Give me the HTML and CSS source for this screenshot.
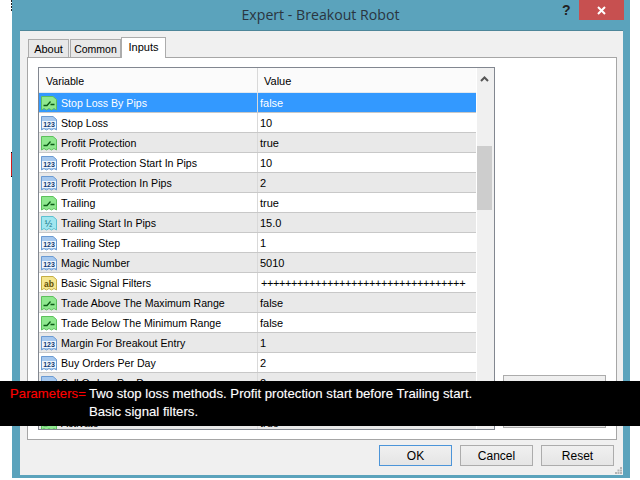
FILE: index.html
```html
<!DOCTYPE html>
<html lang="en">
<head>
<meta charset="utf-8">
<title>Expert - Breakout Robot</title>
<link rel="stylesheet" href="styles.css">
</head>
<body>
<svg class="defs" width="0" height="0" aria-hidden="true">
  <defs>
    <symbol id="i-bool" viewBox="0 0 16 16">
      <path d="M.5 1.500H12L15.500 4.500V15L13 13.500L10.500 15L8 13.500L5.500 15L3 13.500L.5 15Z" fill="#8fe88f" stroke="#5cc05c"/>
      <path d="M2.500 10.500H6L9.500 6.500M9.500 9.500H13.500" fill="none" stroke="#0b5a15" stroke-width="1.300"/>
    </symbol>
    <symbol id="i-int" viewBox="0 0 16 16">
      <path d="M.5 1.500H12L15.500 4.500V15L13 13.500L10.500 15L8 13.500L5.500 15L3 13.500L.5 15Z" fill="#a6c8ee" stroke="#6b9bd2"/>
      <rect x="1" y="6" width="14" height="7" fill="#eef5fc"/>
      <text x="8" y="12.200" text-anchor="middle" class="glyph glyph-int">123</text>
    </symbol>
    <symbol id="i-dbl" viewBox="0 0 16 16">
      <path d="M.5 1.500H12L15.500 4.500V15L13 13.500L10.500 15L8 13.500L5.500 15L3 13.500L.5 15Z" fill="#a0e6ef" stroke="#5cc0d0"/>
      <text x="7.500" y="11.500" text-anchor="middle" class="glyph glyph-dbl">½</text>
    </symbol>
    <symbol id="i-str" viewBox="0 0 16 16">
      <path d="M.5 1.500H12L15.500 4.500V15L13 13.500L10.500 15L8 13.500L5.500 15L3 13.500L.5 15Z" fill="#f5e68f" stroke="#c4ae45"/>
      <text x="8" y="11.500" text-anchor="middle" class="glyph glyph-str">ab</text>
    </symbol>
  </defs>
</svg>
<div class="edge-mark edge-mark-top"></div>
<div class="edge-mark edge-mark-red"></div>
<div class="window">
  <header class="titlebar">
    <span class="title">Expert - Breakout Robot</span>
    <span class="help">?</span>
    <span class="close">
      <svg width="9" height="9" viewBox="0 0 9 9"><path d="M1 1L8 8M8 1L1 8" stroke="#fff" stroke-width="2"/></svg>
    </span>
  </header>
  <div class="client">
    <nav class="tabs">
      <span class="tab tab-about">About</span>
      <span class="tab tab-common">Common</span>
      <span class="tab tab-active">Inputs</span>
    </nav>
    <section class="panel">
      <div class="list">
        <div class="rows">
          <div class="row row-head"><span class="cell-name">Variable</span><span class="cell-value">Value</span></div>
          <div class="row row-selected"><span class="cell-name"><svg class="icon"><use href="#i-bool"/></svg>Stop Loss By Pips</span><span class="cell-value">false</span></div>
          <div class="row"><span class="cell-name"><svg class="icon"><use href="#i-int"/></svg>Stop Loss</span><span class="cell-value">10</span></div>
          <div class="row row-alt"><span class="cell-name"><svg class="icon"><use href="#i-bool"/></svg>Profit Protection</span><span class="cell-value">true</span></div>
          <div class="row"><span class="cell-name"><svg class="icon"><use href="#i-int"/></svg>Profit Protection Start In Pips</span><span class="cell-value">10</span></div>
          <div class="row row-alt"><span class="cell-name"><svg class="icon"><use href="#i-int"/></svg>Profit Protection In Pips</span><span class="cell-value">2</span></div>
          <div class="row"><span class="cell-name"><svg class="icon"><use href="#i-bool"/></svg>Trailing</span><span class="cell-value">true</span></div>
          <div class="row row-alt"><span class="cell-name"><svg class="icon"><use href="#i-dbl"/></svg>Trailing Start In Pips</span><span class="cell-value">15.0</span></div>
          <div class="row"><span class="cell-name"><svg class="icon"><use href="#i-int"/></svg>Trailing Step</span><span class="cell-value">1</span></div>
          <div class="row row-alt"><span class="cell-name"><svg class="icon"><use href="#i-int"/></svg>Magic Number</span><span class="cell-value">5010</span></div>
          <div class="row"><span class="cell-name"><svg class="icon"><use href="#i-str"/></svg>Basic Signal Filters</span><span class="cell-value cell-plus">++++++++++++++++++++++++++++++++++</span></div>
          <div class="row row-alt"><span class="cell-name"><svg class="icon"><use href="#i-bool"/></svg>Trade Above The Maximum Range</span><span class="cell-value">false</span></div>
          <div class="row"><span class="cell-name"><svg class="icon"><use href="#i-bool"/></svg>Trade Below The Minimum Range</span><span class="cell-value">false</span></div>
          <div class="row row-alt"><span class="cell-name"><svg class="icon"><use href="#i-int"/></svg>Margin For Breakout Entry</span><span class="cell-value">1</span></div>
          <div class="row"><span class="cell-name"><svg class="icon"><use href="#i-int"/></svg>Buy Orders Per Day</span><span class="cell-value">2</span></div>
          <div class="row row-alt"><span class="cell-name"><svg class="icon"><use href="#i-int"/></svg>Sell Orders Per Day</span><span class="cell-value">2</span></div>
          <div class="row"></div>
          <div class="row row-alt"><span class="cell-name"><svg class="icon"><use href="#i-bool"/></svg>Activate</span><span class="cell-value">true</span></div>
        </div>
        <div class="scrollbar">
          <svg class="arrow" width="9" height="6" viewBox="0 0 9 6"><path d="M1 5L4.500 1.500L8 5" fill="none" stroke="#555" stroke-width="2"/></svg>
          <div class="thumb"></div>
        </div>
      </div>
      <div class="side">
        <button class="btn btn-side">Load</button>
        <button class="btn btn-side"></button>
      </div>
    </section>
    <footer class="actions">
      <button class="btn btn-action btn-default">OK</button>
      <button class="btn btn-action">Cancel</button>
      <button class="btn btn-action">Reset</button>
    </footer>
    <svg class="grip" width="7" height="7" viewBox="0 0 7 7"><path d="M5 0h2v2H5zM2.500 2.500h2v2h-2zM5 2.500h2v2H5zM0 5h2v2H0zM2.500 5h2v2h-2zM5 5h2v2H5z" fill="#b4b4b4"/></svg>
  </div>
</div>
<aside class="banner">
  <span class="banner-label">Parameters=</span>
  <div class="banner-text">Two stop loss methods. Profit protection start before Trailing start.<br>Basic signal filters.</div>
</aside>
</body>
</html>
```

FILE: styles.css
```css
* { box-sizing: border-box; }
html, body { margin: 0; height: 100%; }
body {
  position: relative;
  width: 640px;
  height: 480px;
  overflow: hidden;
  background: #fff;
  font-family: "Liberation Sans", sans-serif;
  font-size: 11px;
  color: #000;
}
.defs { position: absolute; }
.edge-mark { position: absolute; left: 11px; width: 1px; }
.edge-mark-top { top: 0; height: 12px; background: repeating-linear-gradient(#222 0 2px, #fff 2px 3px); }
.edge-mark-red { top: 152px; height: 25px; background: #d11a1a; border-top: 1px solid #000; border-bottom: 1px solid #000; }
.window {
  width: 618px;
  height: 478px;
  margin-left: 12px;
  background: #5ba3bc;
  display: flex;
  flex-direction: column;
  padding: 0 7px 3px 8px;
}
.titlebar {
  height: 30px;
  flex: none;
  position: relative;
  display: flex;
  justify-content: center;
}
.title {
  font-family: "Open Sans", sans-serif;
  font-size: 14.15px;
  line-height: 30px;
  color: #2a3540;
  margin-right: 2px;
}
.help {
  position: absolute;
  left: 542px;
  top: 0;
  font: bold 14px/20px "Liberation Sans", sans-serif;
  color: #222;
}
.close {
  position: absolute;
  left: 559px;
  top: 0;
  width: 45px;
  height: 20px;
  background: #c75050;
  display: flex;
  align-items: center;
  justify-content: center;
}
.client {
  flex: 1;
  position: relative;
  background: #f0f0f0;
  padding: 0 6px 0 7px;
  display: flex;
  flex-direction: column;
  border-top: 1px solid #4d8699;
}
.tabs {
  height: 26px;
  display: flex;
  align-items: flex-end;
  padding-left: 1px;
  flex: none;
}
.tab {
  height: 18px;
  margin-right: 1px;
  background: #e8e8e8;
  border: 1px solid #acacac;
  border-bottom: 0;
  line-height: 19px;
  text-align: center;
}
.tab-about { width: 41px; }
.tab-common { width: 51px; font-size: 10.500px; }
.tab-active {
  width: 45px;
  height: 21px;
  margin: 0 0 -1px -1px;
  background: #fff;
  position: relative;
  line-height: 18px;
  z-index: 1;
}
.panel {
  height: 383px;
  flex: none;
  background: #fff;
  border: 1px solid #a6a6a6;
  padding: 9px 10px 9px 10px;
  display: flex;
  gap: 8px;
}
.list {
  width: 457px;
  height: 363px;
  flex: none;
  border: 1px solid #828790;
  display: flex;
  overflow: hidden;
}
.rows { width: 437px; flex: none; }
.row {
  height: 20px;
  display: flex;
  background: #fff;
  border-bottom: 1px solid #c8c8c8;
  line-height: 21px;
  white-space: nowrap;
}
.row-head {
  height: 25px;
  background: #fbfbfb;
  line-height: 26px;
  border-bottom: 1px solid #e3e9ef;
}
.row-alt { background: #e9e9e9; }
.row-selected { background: #3399ff; color: #fff; }
.cell-name {
  width: 219px;
  flex: none;
  display: flex;
  align-items: flex-start;
  gap: 4px;
  padding-left: 2px;
  border-right: 1px solid #d9d9d9;
  font-size: 10.600px;
}
.cell-value { padding-left: 2px; }
.cell-plus { letter-spacing: -0.42px; padding-left: 3px; }
.row-head .cell-name { padding-left: 7px; }
.row-head .cell-value { padding-left: 6px; }
.icon { width: 16px; height: 16px; flex: none; margin-top: 2px; }
.glyph { font-family: "Liberation Sans", sans-serif; font-weight: bold; }
.glyph-int { font-size: 7px; fill: #0e3a73; }
.glyph-dbl { font-size: 9px; fill: #0d6b7a; font-weight: normal; }
.glyph-str { font-size: 8.500px; fill: #5e4d05; }
.scrollbar {
  flex: 1;
  background: #f0f0f0;
  position: relative;
  border-left: 1px solid #fff;
}
.arrow { position: absolute; left: 3px; top: 8px; }
.thumb {
  position: absolute;
  left: 0;
  top: 78px;
  width: 15px;
  height: 64px;
  background: #cdcdcd;
}
.side {
  width: 103px;
  flex: none;
  display: flex;
  flex-direction: column;
  justify-content: flex-end;
  gap: 7px;
  padding-bottom: 2px;
}
.btn {
  font: inherit;
  color: inherit;
  background: linear-gradient(#f0f0f0, #e5e5e5);
  border: 1px solid #acacac;
  padding: 0;
}
.btn-side { height: 23px; padding-bottom: 3px; }
.actions {
  display: flex;
  justify-content: flex-end;
  gap: 8px;
  padding: 5px 3px 0 0;
}
.btn-action { width: 73px; height: 21px; font-size: 12px; }
.btn-default { border-color: #4c95d9; }
.grip { position: absolute; right: 1px; bottom: 1px; }
.banner {
  position: absolute;
  left: 0;
  top: 381px;
  width: 640px;
  height: 45px;
  background: #000;
  color: #fff;
  display: flex;
  gap: 3px;
  padding: 4px 0 0 10px;
  font-family: "Liberation Sans", sans-serif;
  font-size: 13.200px;
  line-height: 18px;
  text-shadow: 0 0 1px rgba(255, 255, 255, 0.35);
}
.banner-label { color: #f00; text-shadow: 0 0 1px rgba(255, 0, 0, 0.35); }
```
